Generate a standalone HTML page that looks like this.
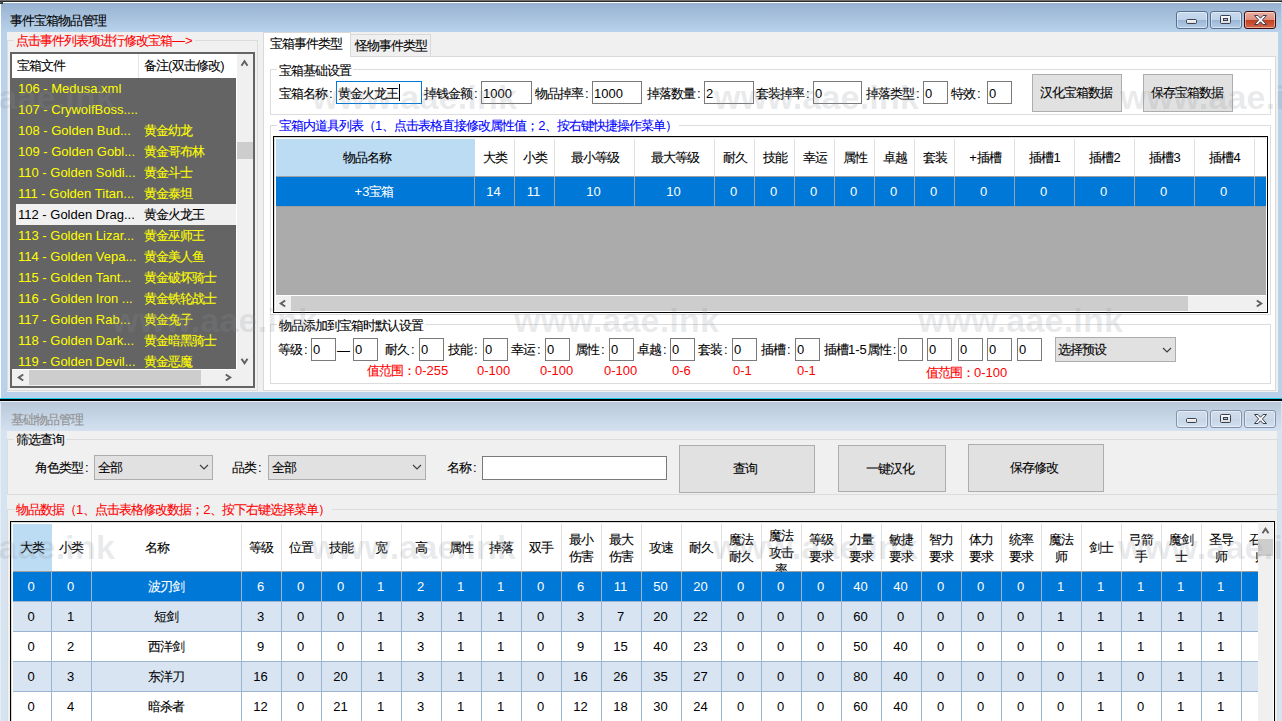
<!DOCTYPE html><html><head><meta charset="utf-8"><style>
html,body{margin:0;padding:0;width:1282px;height:721px;overflow:hidden;background:#f0f0f0}
body{position:relative;font-family:"Liberation Sans",sans-serif;font-size:13px;color:#000}
div{position:absolute;box-sizing:border-box}
svg{position:absolute}
.t{white-space:nowrap;height:18px;line-height:18px}
.c{text-align:center}
.z{letter-spacing:-1px;-webkit-text-stroke:0.1px currentColor}
.co{padding-left:2px}
.gb{border:1px solid #dcdcdc}
.inp{background:#fff;border:1px solid #7a7a7a}
.btn{background:#e1e1e1;border:1px solid #adadad}
</style></head><body>

<div style="left:0px;top:0px;width:1282px;height:400px;background:#b9d1ea"></div>
<div style="left:0px;top:0px;width:1282px;height:1px;background:#6e6e6e"></div>
<div style="left:0px;top:1px;width:1282px;height:1px;background:#2a2a2a"></div>
<div style="left:1px;top:2px;width:1280px;height:1px;background:#ffffff"></div>
<div style="left:1px;top:3px;width:1280px;height:29px;background:linear-gradient(#97b2d1,#b9d2eb)"></div>
<div style="left:0px;top:4px;width:1px;height:394px;background:#ffffff"></div>
<div style="left:0px;top:1px;width:3px;height:3px;background:#3a3a3a;border-radius:3px 0 0 0"></div>
<div class="t" style="left:10px;top:12px;"><span class="z">事件宝箱物品管理</span></div>
<div style="left:1176px;top:11px;width:32px;height:18px;background:linear-gradient(#c8daee 0%,#bed2ea 48%,#9ab6d6 52%,#b6cde6 100%);border:1px solid #56708e;border-radius:3px;box-shadow:inset 0 0 0 1px rgba(255,255,255,0.45)"><div style="left:9px;top:7px;width:11px;height:5px;background:linear-gradient(#fafafa,#dcdcdc);border:1px solid #3a4050;border-radius:1.5px"></div></div>
<div style="left:1210px;top:11px;width:32px;height:18px;background:linear-gradient(#c8daee 0%,#bed2ea 48%,#9ab6d6 52%,#b6cde6 100%);border:1px solid #56708e;border-radius:3px;box-shadow:inset 0 0 0 1px rgba(255,255,255,0.45)"><div style="left:9px;top:3px;width:11px;height:9px;background:linear-gradient(#fafafa,#dcdcdc);border:1px solid #3a4050;border-radius:1.5px"><div style="left:2px;top:2px;width:5px;height:3px;background:#a8c0dc;border:1px solid #3a4050"></div></div></div>
<div style="left:1244px;top:11px;width:32px;height:18px;background:linear-gradient(#eab0a2 0%,#dd907e 48%,#c2401f 52%,#d2664a 100%);border:1px solid #3c0a0a;border-radius:3px;box-shadow:inset 0 0 0 1px rgba(255,255,255,0.45)"><svg style="left:9px;top:3px" width="13" height="11" viewBox="0 0 13 11"><path d="M0.5 0.5 L4 0.5 L6.5 3.2 L9 0.5 L12.5 0.5 L8.4 5 L12.5 9.5 L9 9.5 L6.5 6.8 L4 9.5 L0.5 9.5 L4.6 5 Z" fill="#f4f4f4" stroke="#3a4050" stroke-width="1" stroke-linejoin="round"/></svg></div>
<div style="left:7px;top:32px;width:1271px;height:360px;background:#f0f0f0"></div>
<div class="gb" style="left:7px;top:40px;width:251px;height:351px;"></div>
<div class="t" style="left:14px;top:33px;height:14px;line-height:14px;padding:0 2px 0 2px;background:#f0f0f0;color:#ff0000"><div class="t" style="position:relative;top:-1px"><span class="z">点击事件列表项进行修改宝箱</span>—&gt;</div></div>
<div style="left:10px;top:52px;width:245px;height:336px;background:#646464;border:2px solid #646464"></div>
<div style="left:12px;top:54px;width:224px;height:24px;background:#fff"></div>
<div style="left:138px;top:54px;width:1px;height:24px;background:#e5e5e5"></div>
<div class="t" style="left:17px;top:57px;"><span class="z">宝箱文件</span></div>
<div class="t" style="left:144px;top:57px;"><span class="z">备注</span>(<span class="z">双击修改</span>)</div>
<div style="left:12px;top:78px;width:224px;height:291px;overflow:hidden">
<div class="t" style="left:6px;top:2px;color:#ffff00">106&nbsp;-&nbsp;Medusa.xml</div>
<div class="t" style="left:6px;top:23px;color:#ffff00">107&nbsp;-&nbsp;CrywolfBoss....</div>
<div class="t" style="left:6px;top:44px;color:#ffff00">108&nbsp;-&nbsp;Golden&nbsp;Bud...</div>
<div class="t" style="left:132px;top:44px;color:#ffff00"><span class="z">黄金幼龙</span></div>
<div class="t" style="left:6px;top:65px;color:#ffff00">109&nbsp;-&nbsp;Golden&nbsp;Gobl...</div>
<div class="t" style="left:132px;top:65px;color:#ffff00"><span class="z">黄金哥布林</span></div>
<div class="t" style="left:6px;top:86px;color:#ffff00">110&nbsp;-&nbsp;Golden&nbsp;Soldi...</div>
<div class="t" style="left:132px;top:86px;color:#ffff00"><span class="z">黄金斗士</span></div>
<div class="t" style="left:6px;top:107px;color:#ffff00">111&nbsp;-&nbsp;Golden&nbsp;Titan...</div>
<div class="t" style="left:132px;top:107px;color:#ffff00"><span class="z">黄金泰坦</span></div>
<div style="left:4px;top:126px;width:220px;height:21px;background:#f0f0f0"></div>
<div class="t" style="left:6px;top:128px;color:#000">112&nbsp;-&nbsp;Golden&nbsp;Drag...</div>
<div class="t" style="left:132px;top:128px;color:#000"><span class="z">黄金火龙王</span></div>
<div class="t" style="left:6px;top:149px;color:#ffff00">113&nbsp;-&nbsp;Golden&nbsp;Lizar...</div>
<div class="t" style="left:132px;top:149px;color:#ffff00"><span class="z">黄金巫师王</span></div>
<div class="t" style="left:6px;top:170px;color:#ffff00">114&nbsp;-&nbsp;Golden&nbsp;Vepa...</div>
<div class="t" style="left:132px;top:170px;color:#ffff00"><span class="z">黄金美人鱼</span></div>
<div class="t" style="left:6px;top:191px;color:#ffff00">115&nbsp;-&nbsp;Golden&nbsp;Tant...</div>
<div class="t" style="left:132px;top:191px;color:#ffff00"><span class="z">黄金破坏骑士</span></div>
<div class="t" style="left:6px;top:212px;color:#ffff00">116&nbsp;-&nbsp;Golden&nbsp;Iron&nbsp;...</div>
<div class="t" style="left:132px;top:212px;color:#ffff00"><span class="z">黄金铁轮战士</span></div>
<div class="t" style="left:6px;top:233px;color:#ffff00">117&nbsp;-&nbsp;Golden&nbsp;Rab...</div>
<div class="t" style="left:132px;top:233px;color:#ffff00"><span class="z">黄金兔子</span></div>
<div class="t" style="left:6px;top:254px;color:#ffff00">118&nbsp;-&nbsp;Golden&nbsp;Dark...</div>
<div class="t" style="left:132px;top:254px;color:#ffff00"><span class="z">黄金暗黑骑士</span></div>
<div class="t" style="left:6px;top:275px;color:#ffff00">119&nbsp;-&nbsp;Golden&nbsp;Devil...</div>
<div class="t" style="left:132px;top:275px;color:#ffff00"><span class="z">黄金恶魔</span></div>
</div>
<div style="left:236px;top:54px;width:1px;height:316px;background:#fff"></div>
<div style="left:12px;top:369px;width:224px;height:1px;background:#fff"></div>
<div style="left:237px;top:54px;width:16px;height:316px;background:#f0f0f0"></div>
<div style="left:237px;top:142px;width:16px;height:17px;background:#cdcdcd"></div>
<svg style="left:0;top:0;overflow:visible" width="1" height="1"><path d="M241.5 65.7 L244.5 61.3 L247.5 65.7" stroke="#606060" stroke-width="2" fill="none"/></svg>
<svg style="left:0;top:0;overflow:visible" width="1" height="1"><path d="M241.5 358.8 L244.5 363.2 L247.5 358.8" stroke="#606060" stroke-width="2" fill="none"/></svg>
<div style="left:12px;top:370px;width:241px;height:16px;background:#f0f0f0"></div>
<div style="left:29px;top:370px;width:172px;height:15px;background:#cdcdcd"></div>
<svg style="left:0;top:0;overflow:visible" width="1" height="1"><path d="M23.2 374.5 L18.8 377.5 L23.2 380.5" stroke="#606060" stroke-width="2" fill="none"/></svg>
<svg style="left:0;top:0;overflow:visible" width="1" height="1"><path d="M225.8 374.5 L230.2 377.5 L225.8 380.5" stroke="#606060" stroke-width="2" fill="none"/></svg>
<div style="left:263px;top:56px;width:1013px;height:335px;background:#fff;border:1px solid #d9d9d9"></div>
<div style="left:350px;top:34px;width:81px;height:23px;background:#f0f0f0;border:1px solid #d9d9d9;border-left:none"></div>
<div style="left:263px;top:32px;width:88px;height:25px;background:#fff;border:1px solid #d9d9d9;border-bottom:none"></div>
<div class="t" style="left:270px;top:35px;"><span class="z">宝箱事件类型</span></div>
<div class="t" style="left:355px;top:37px;"><span class="z">怪物事件类型</span></div>
<div class="gb" style="left:270px;top:69px;width:1001px;height:46px;"></div>
<div class="t" style="left:277px;top:62px;height:14px;line-height:14px;padding:0 2px 0 2px;background:#fff;color:#000"><div class="t" style="position:relative;top:0px"><span class="z">宝箱基础设置</span></div></div>
<div class="t" style="left:279px;top:85px;"><span class="z">宝箱名称</span><span class="co">:</span></div><div style="left:336px;top:81px;width:86px;height:23px;background:#fff;border:1px solid #0078d7"></div><div class="t" style="left:338px;top:85px;"><span class="z">黄金火龙王</span></div>
<div style="left:399px;top:84px;width:1px;height:17px;background:#000"></div>
<div class="t" style="left:424px;top:85px;"><span class="z">掉钱金额</span><span class="co">:</span></div><div style="left:481px;top:81px;width:51px;height:23px;background:#fff;border:1px solid #7a7a7a"></div><div class="t" style="left:483px;top:85px;">1000</div>
<div class="t" style="left:535px;top:85px;"><span class="z">物品掉率</span><span class="co">:</span></div><div style="left:592px;top:81px;width:50px;height:23px;background:#fff;border:1px solid #7a7a7a"></div><div class="t" style="left:594px;top:85px;">1000</div>
<div class="t" style="left:647px;top:85px;"><span class="z">掉落数量</span><span class="co">:</span></div><div style="left:704px;top:81px;width:50px;height:23px;background:#fff;border:1px solid #7a7a7a"></div><div class="t" style="left:706px;top:85px;">2</div>
<div class="t" style="left:756px;top:85px;"><span class="z">套装掉率</span><span class="co">:</span></div><div style="left:813px;top:81px;width:49px;height:23px;background:#fff;border:1px solid #7a7a7a"></div><div class="t" style="left:815px;top:85px;">0</div>
<div class="t" style="left:866px;top:85px;"><span class="z">掉落类型</span><span class="co">:</span></div><div style="left:923px;top:81px;width:25px;height:23px;background:#fff;border:1px solid #7a7a7a"></div><div class="t" style="left:925px;top:85px;">0</div>
<div class="t" style="left:951px;top:85px;"><span class="z">特效</span><span class="co">:</span></div><div style="left:987px;top:81px;width:25px;height:23px;background:#fff;border:1px solid #7a7a7a"></div><div class="t" style="left:989px;top:85px;">0</div>
<div class="btn" style="left:1032px;top:74px;width:90px;height:38px;"></div>
<div class="t c" style="left:1031px;top:84px;width:90px;"><span class="z">汉化宝箱数据</span></div>
<div class="btn" style="left:1143px;top:74px;width:90px;height:38px;"></div>
<div class="t c" style="left:1142px;top:84px;width:90px;"><span class="z">保存宝箱数据</span></div>
<div class="gb" style="left:270px;top:125px;width:1001px;height:190px;"></div>
<div class="t" style="left:277px;top:118px;height:14px;line-height:14px;padding:0 2px 0 2px;background:#fff;color:#0000ff"><div class="t" style="position:relative;top:-1px"><span class="z">宝箱内道具列表（</span>1<span class="z">、点击表格直接修改属性值；</span>2<span class="z">、按右键快捷操作菜单）</span></div></div>
<div style="left:273px;top:136px;width:995px;height:177px;background:#fff;border:1px solid #000"></div>
<div style="left:274px;top:137px;width:992px;height:1px;background:#d8d8d8"></div>
<div style="left:274px;top:137px;width:1px;height:174px;background:#d8d8d8"></div>
<div style="left:276px;top:139px;width:990px;height:156px;overflow:hidden;background:#ababab">
<div style="left:0px;top:0px;width:199px;height:38px;background:#bcdcf4;border-right:none;border-bottom:1px solid #a0a0a0"></div>
<div class="t c" style="left:-18px;top:10px;width:217px;"><span class="z">物品名称</span></div>
<div style="left:0px;top:38px;width:199px;height:30px;background:#0078d7;border-right:1px solid #a0a0a0;border-bottom:1px solid #a0a0a0"></div>
<div class="t c" style="left:-2px;top:44px;width:200px;color:#fff">+3<span class="z">宝箱</span></div>
<div style="left:199px;top:0px;width:40px;height:38px;background:#fff;border-right:1px solid #e0e0e0;border-bottom:1px solid #a0a0a0"></div>
<div class="t c" style="left:199px;top:10px;width:40px;"><span class="z">大类</span></div>
<div style="left:199px;top:38px;width:40px;height:30px;background:#0078d7;border-right:1px solid #a0a0a0;border-bottom:1px solid #a0a0a0"></div>
<div class="t c" style="left:197px;top:44px;width:41px;color:#fff">14</div>
<div style="left:239px;top:0px;width:40px;height:38px;background:#fff;border-right:1px solid #e0e0e0;border-bottom:1px solid #a0a0a0"></div>
<div class="t c" style="left:239px;top:10px;width:40px;"><span class="z">小类</span></div>
<div style="left:239px;top:38px;width:40px;height:30px;background:#0078d7;border-right:1px solid #a0a0a0;border-bottom:1px solid #a0a0a0"></div>
<div class="t c" style="left:237px;top:44px;width:41px;color:#fff">11</div>
<div style="left:279px;top:0px;width:80px;height:38px;background:#fff;border-right:1px solid #e0e0e0;border-bottom:1px solid #a0a0a0"></div>
<div class="t c" style="left:279px;top:10px;width:80px;"><span class="z">最小等级</span></div>
<div style="left:279px;top:38px;width:80px;height:30px;background:#0078d7;border-right:1px solid #a0a0a0;border-bottom:1px solid #a0a0a0"></div>
<div class="t c" style="left:277px;top:44px;width:81px;color:#fff">10</div>
<div style="left:359px;top:0px;width:80px;height:38px;background:#fff;border-right:1px solid #e0e0e0;border-bottom:1px solid #a0a0a0"></div>
<div class="t c" style="left:359px;top:10px;width:80px;"><span class="z">最大等级</span></div>
<div style="left:359px;top:38px;width:80px;height:30px;background:#0078d7;border-right:1px solid #a0a0a0;border-bottom:1px solid #a0a0a0"></div>
<div class="t c" style="left:357px;top:44px;width:81px;color:#fff">10</div>
<div style="left:439px;top:0px;width:40px;height:38px;background:#fff;border-right:1px solid #e0e0e0;border-bottom:1px solid #a0a0a0"></div>
<div class="t c" style="left:439px;top:10px;width:40px;"><span class="z">耐久</span></div>
<div style="left:439px;top:38px;width:40px;height:30px;background:#0078d7;border-right:1px solid #a0a0a0;border-bottom:1px solid #a0a0a0"></div>
<div class="t c" style="left:437px;top:44px;width:41px;color:#fff">0</div>
<div style="left:479px;top:0px;width:40px;height:38px;background:#fff;border-right:1px solid #e0e0e0;border-bottom:1px solid #a0a0a0"></div>
<div class="t c" style="left:479px;top:10px;width:40px;"><span class="z">技能</span></div>
<div style="left:479px;top:38px;width:40px;height:30px;background:#0078d7;border-right:1px solid #a0a0a0;border-bottom:1px solid #a0a0a0"></div>
<div class="t c" style="left:477px;top:44px;width:41px;color:#fff">0</div>
<div style="left:519px;top:0px;width:40px;height:38px;background:#fff;border-right:1px solid #e0e0e0;border-bottom:1px solid #a0a0a0"></div>
<div class="t c" style="left:519px;top:10px;width:40px;"><span class="z">幸运</span></div>
<div style="left:519px;top:38px;width:40px;height:30px;background:#0078d7;border-right:1px solid #a0a0a0;border-bottom:1px solid #a0a0a0"></div>
<div class="t c" style="left:517px;top:44px;width:41px;color:#fff">0</div>
<div style="left:559px;top:0px;width:40px;height:38px;background:#fff;border-right:1px solid #e0e0e0;border-bottom:1px solid #a0a0a0"></div>
<div class="t c" style="left:559px;top:10px;width:40px;"><span class="z">属性</span></div>
<div style="left:559px;top:38px;width:40px;height:30px;background:#0078d7;border-right:1px solid #a0a0a0;border-bottom:1px solid #a0a0a0"></div>
<div class="t c" style="left:557px;top:44px;width:41px;color:#fff">0</div>
<div style="left:599px;top:0px;width:40px;height:38px;background:#fff;border-right:1px solid #e0e0e0;border-bottom:1px solid #a0a0a0"></div>
<div class="t c" style="left:599px;top:10px;width:40px;"><span class="z">卓越</span></div>
<div style="left:599px;top:38px;width:40px;height:30px;background:#0078d7;border-right:1px solid #a0a0a0;border-bottom:1px solid #a0a0a0"></div>
<div class="t c" style="left:597px;top:44px;width:41px;color:#fff">0</div>
<div style="left:639px;top:0px;width:40px;height:38px;background:#fff;border-right:1px solid #e0e0e0;border-bottom:1px solid #a0a0a0"></div>
<div class="t c" style="left:639px;top:10px;width:40px;"><span class="z">套装</span></div>
<div style="left:639px;top:38px;width:40px;height:30px;background:#0078d7;border-right:1px solid #a0a0a0;border-bottom:1px solid #a0a0a0"></div>
<div class="t c" style="left:637px;top:44px;width:41px;color:#fff">0</div>
<div style="left:679px;top:0px;width:60px;height:38px;background:#fff;border-right:1px solid #e0e0e0;border-bottom:1px solid #a0a0a0"></div>
<div class="t c" style="left:679px;top:10px;width:60px;">+<span class="z">插槽</span></div>
<div style="left:679px;top:38px;width:60px;height:30px;background:#0078d7;border-right:1px solid #a0a0a0;border-bottom:1px solid #a0a0a0"></div>
<div class="t c" style="left:677px;top:44px;width:61px;color:#fff">0</div>
<div style="left:739px;top:0px;width:60px;height:38px;background:#fff;border-right:1px solid #e0e0e0;border-bottom:1px solid #a0a0a0"></div>
<div class="t c" style="left:739px;top:10px;width:60px;"><span class="z">插槽</span>1</div>
<div style="left:739px;top:38px;width:60px;height:30px;background:#0078d7;border-right:1px solid #a0a0a0;border-bottom:1px solid #a0a0a0"></div>
<div class="t c" style="left:737px;top:44px;width:61px;color:#fff">0</div>
<div style="left:799px;top:0px;width:60px;height:38px;background:#fff;border-right:1px solid #e0e0e0;border-bottom:1px solid #a0a0a0"></div>
<div class="t c" style="left:799px;top:10px;width:60px;"><span class="z">插槽</span>2</div>
<div style="left:799px;top:38px;width:60px;height:30px;background:#0078d7;border-right:1px solid #a0a0a0;border-bottom:1px solid #a0a0a0"></div>
<div class="t c" style="left:797px;top:44px;width:61px;color:#fff">0</div>
<div style="left:859px;top:0px;width:60px;height:38px;background:#fff;border-right:1px solid #e0e0e0;border-bottom:1px solid #a0a0a0"></div>
<div class="t c" style="left:859px;top:10px;width:60px;"><span class="z">插槽</span>3</div>
<div style="left:859px;top:38px;width:60px;height:30px;background:#0078d7;border-right:1px solid #a0a0a0;border-bottom:1px solid #a0a0a0"></div>
<div class="t c" style="left:857px;top:44px;width:61px;color:#fff">0</div>
<div style="left:919px;top:0px;width:60px;height:38px;background:#fff;border-right:1px solid #e0e0e0;border-bottom:1px solid #a0a0a0"></div>
<div class="t c" style="left:919px;top:10px;width:60px;"><span class="z">插槽</span>4</div>
<div style="left:919px;top:38px;width:60px;height:30px;background:#0078d7;border-right:1px solid #a0a0a0;border-bottom:1px solid #a0a0a0"></div>
<div class="t c" style="left:917px;top:44px;width:61px;color:#fff">0</div>
<div style="left:979px;top:0px;width:60px;height:38px;background:#fff;border-right:1px solid #e0e0e0;border-bottom:1px solid #a0a0a0"></div>
<div style="left:979px;top:38px;width:60px;height:30px;background:#0078d7;border-right:1px solid #a0a0a0;border-bottom:1px solid #a0a0a0"></div>
</div>
<div style="left:276px;top:295px;width:990px;height:1px;background:#fff"></div>
<div style="left:276px;top:296px;width:990px;height:15px;background:#f0f0f0"></div>
<div style="left:291px;top:296px;width:897px;height:15px;background:#cdcdcd"></div>
<svg style="left:0;top:0;overflow:visible" width="1" height="1"><path d="M285.2 300.5 L280.8 303.5 L285.2 306.5" stroke="#606060" stroke-width="2" fill="none"/></svg>
<svg style="left:0;top:0;overflow:visible" width="1" height="1"><path d="M1256.8 300.5 L1261.2 303.5 L1256.8 306.5" stroke="#606060" stroke-width="2" fill="none"/></svg>
<div class="gb" style="left:270px;top:324px;width:1001px;height:60px;"></div>
<div class="t" style="left:277px;top:317px;height:14px;line-height:14px;padding:0 2px 0 2px;background:#fff;color:#000"><div class="t" style="position:relative;top:0px"><span class="z">物品添加到宝箱时默认设置</span></div></div>
<div class="t" style="left:278px;top:341px;"><span class="z">等级</span><span class="co">:</span></div><div style="left:311px;top:338px;width:25px;height:23px;background:#fff;border:1px solid #7a7a7a"></div><div class="t" style="left:313px;top:341px;">0</div>
<div class="t" style="left:337px;top:342px;">—</div>
<div style="left:353px;top:338px;width:25px;height:23px;background:#fff;border:1px solid #7a7a7a"></div><div class="t" style="left:355px;top:341px;">0</div>
<div class="t" style="left:385px;top:341px;"><span class="z">耐久</span><span class="co">:</span></div><div style="left:419px;top:338px;width:25px;height:23px;background:#fff;border:1px solid #7a7a7a"></div><div class="t" style="left:421px;top:341px;">0</div>
<div class="t" style="left:448px;top:341px;"><span class="z">技能</span><span class="co">:</span></div><div style="left:483px;top:338px;width:25px;height:23px;background:#fff;border:1px solid #7a7a7a"></div><div class="t" style="left:485px;top:341px;">0</div>
<div class="t" style="left:511px;top:341px;"><span class="z">幸运</span><span class="co">:</span></div><div style="left:545px;top:338px;width:25px;height:23px;background:#fff;border:1px solid #7a7a7a"></div><div class="t" style="left:547px;top:341px;">0</div>
<div class="t" style="left:575px;top:341px;"><span class="z">属性</span><span class="co">:</span></div><div style="left:609px;top:338px;width:25px;height:23px;background:#fff;border:1px solid #7a7a7a"></div><div class="t" style="left:611px;top:341px;">0</div>
<div class="t" style="left:637px;top:341px;"><span class="z">卓越</span><span class="co">:</span></div><div style="left:670px;top:338px;width:25px;height:23px;background:#fff;border:1px solid #7a7a7a"></div><div class="t" style="left:672px;top:341px;">0</div>
<div class="t" style="left:698px;top:341px;"><span class="z">套装</span><span class="co">:</span></div><div style="left:732px;top:338px;width:25px;height:23px;background:#fff;border:1px solid #7a7a7a"></div><div class="t" style="left:734px;top:341px;">0</div>
<div class="t" style="left:761px;top:341px;"><span class="z">插槽</span><span class="co">:</span></div><div style="left:795px;top:338px;width:25px;height:23px;background:#fff;border:1px solid #7a7a7a"></div><div class="t" style="left:797px;top:341px;">0</div>
<div class="t" style="left:824px;top:341px;"><span class="z">插槽</span>1-5<span class="z">属性</span><span class="co">:</span></div><div style="left:898px;top:338px;width:25px;height:23px;background:#fff;border:1px solid #7a7a7a"></div><div class="t" style="left:900px;top:341px;">0</div>
<div style="left:927px;top:338px;width:25px;height:23px;background:#fff;border:1px solid #7a7a7a"></div><div class="t" style="left:929px;top:341px;">0</div>
<div style="left:958px;top:338px;width:25px;height:23px;background:#fff;border:1px solid #7a7a7a"></div><div class="t" style="left:960px;top:341px;">0</div>
<div style="left:987px;top:338px;width:25px;height:23px;background:#fff;border:1px solid #7a7a7a"></div><div class="t" style="left:989px;top:341px;">0</div>
<div style="left:1017px;top:338px;width:25px;height:23px;background:#fff;border:1px solid #7a7a7a"></div><div class="t" style="left:1019px;top:341px;">0</div>
<div class="t" style="left:367px;top:362px;color:#ff0000"><span class="z">值范围：</span>0-255</div>
<div class="t" style="left:477px;top:362px;color:#ff0000">0-100</div>
<div class="t" style="left:540px;top:362px;color:#ff0000">0-100</div>
<div class="t" style="left:604px;top:362px;color:#ff0000">0-100</div>
<div class="t" style="left:672px;top:362px;color:#ff0000">0-6</div>
<div class="t" style="left:733px;top:362px;color:#ff0000">0-1</div>
<div class="t" style="left:797px;top:362px;color:#ff0000">0-1</div>
<div class="t" style="left:926px;top:364px;color:#ff0000"><span class="z">值范围：</span>0-100</div>
<div style="left:1055px;top:337px;width:121px;height:25px;background:#e1e1e1;border:1px solid #adadad"></div>
<div class="t" style="left:1058px;top:341px;"><span class="z">选择预设</span></div>
<svg style="left:1162px;top:346px" width="10" height="8"><path d="M1 2 L5 6 L9 2" stroke="#404040" stroke-width="1.2" fill="none"/></svg>
<div style="left:0px;top:398px;width:1282px;height:1px;background:#19c8e8"></div>
<div style="left:0px;top:399px;width:1282px;height:2px;background:#000"></div>
<div style="left:0px;top:401px;width:1282px;height:320px;background:#d6e3f0"></div>
<div style="left:0px;top:404px;width:1px;height:317px;background:#e8ecf4"></div>
<div style="left:1px;top:401px;width:1280px;height:1px;background:#e8eef6"></div>
<div style="left:1px;top:402px;width:1280px;height:29px;background:linear-gradient(#b9c9da,#d3e1f0)"></div>
<div class="t" style="left:11px;top:411px;color:#909090"><span class="z">基础物品管理</span></div>
<div style="left:1176px;top:410px;width:32px;height:18px;background:linear-gradient(#d0dcea 0%,#cbd8e8 50%,#c6d5e6 52%,#d2e0ee 100%);border:1px solid #8292b0;border-radius:3px;box-shadow:inset 0 0 0 1px rgba(255,255,255,0.45)"><div style="left:9px;top:7px;width:11px;height:5px;background:linear-gradient(#fafafa,#dcdcdc);border:1px solid #3a4050;border-radius:1.5px"></div></div>
<div style="left:1210px;top:410px;width:32px;height:18px;background:linear-gradient(#d0dcea 0%,#cbd8e8 50%,#c6d5e6 52%,#d2e0ee 100%);border:1px solid #8292b0;border-radius:3px;box-shadow:inset 0 0 0 1px rgba(255,255,255,0.45)"><div style="left:9px;top:3px;width:11px;height:9px;background:linear-gradient(#fafafa,#dcdcdc);border:1px solid #3a4050;border-radius:1.5px"><div style="left:2px;top:2px;width:5px;height:3px;background:#a8c0dc;border:1px solid #3a4050"></div></div></div>
<div style="left:1244px;top:410px;width:32px;height:18px;background:linear-gradient(#d0dcea 0%,#cbd8e8 50%,#c6d5e6 52%,#d2e0ee 100%);border:1px solid #8292b0;border-radius:3px;box-shadow:inset 0 0 0 1px rgba(255,255,255,0.45)"><svg style="left:9px;top:3px" width="13" height="11" viewBox="0 0 13 11"><path d="M0.5 0.5 L4 0.5 L6.5 3.2 L9 0.5 L12.5 0.5 L8.4 5 L12.5 9.5 L9 9.5 L6.5 6.8 L4 9.5 L0.5 9.5 L4.6 5 Z" fill="#f4f4f4" stroke="#3a4050" stroke-width="1" stroke-linejoin="round"/></svg></div>
<div style="left:7px;top:431px;width:1270px;height:290px;background:#f0f0f0"></div>
<div class="gb" style="left:7px;top:439px;width:1271px;height:56px;"></div>
<div class="t" style="left:14px;top:432px;height:14px;line-height:14px;padding:0 2px 0 2px;background:#f0f0f0;color:#000"><div class="t" style="position:relative;top:-1px"><span class="z">筛选查询</span></div></div>
<div class="t" style="left:35px;top:459px;"><span class="z">角色类型</span><span class="co">:</span></div>
<div style="left:94px;top:455px;width:119px;height:25px;background:#e1e1e1;border:1px solid #adadad"></div>
<div class="t" style="left:98px;top:459px;"><span class="z">全部</span></div>
<svg style="left:199px;top:463px" width="10" height="8"><path d="M1 2 L5 6 L9 2" stroke="#404040" stroke-width="1.2" fill="none"/></svg>
<div class="t" style="left:232px;top:459px;"><span class="z">品类</span><span class="co">:</span></div>
<div style="left:268px;top:455px;width:158px;height:25px;background:#e1e1e1;border:1px solid #adadad"></div>
<div class="t" style="left:272px;top:459px;"><span class="z">全部</span></div>
<svg style="left:412px;top:463px" width="10" height="8"><path d="M1 2 L5 6 L9 2" stroke="#404040" stroke-width="1.2" fill="none"/></svg>
<div class="t" style="left:447px;top:459px;"><span class="z">名称</span><span class="co">:</span></div>
<div style="left:482px;top:456px;width:185px;height:24px;background:#fff;border:1px solid #7a7a7a"></div>
<div class="btn" style="left:679px;top:445px;width:136px;height:48px;"></div>
<div class="t c" style="left:677px;top:460px;width:136px;"><span class="z">查询</span></div>
<div class="btn" style="left:838px;top:445px;width:108px;height:47px;"></div>
<div class="t c" style="left:836px;top:460px;width:108px;"><span class="z">一键汉化</span></div>
<div class="btn" style="left:968px;top:444px;width:136px;height:48px;"></div>
<div class="t c" style="left:966px;top:459px;width:136px;"><span class="z">保存修改</span></div>
<div class="gb" style="left:7px;top:509px;width:1271px;height:230px;"></div>
<div class="t" style="left:14px;top:502px;height:14px;line-height:14px;padding:0 2px 0 2px;background:#f0f0f0;color:#ff0000"><div class="t" style="position:relative;top:-1px"><span class="z">物品数据（</span>1<span class="z">、点击表格修改数据；</span>2<span class="z">、按下右键选择菜单）</span></div></div>
<div style="left:10px;top:521px;width:1265px;height:210px;background:#fff;border:1px solid #000"></div>
<div style="left:11px;top:522px;width:1262px;height:1px;background:#d8d8d8"></div>
<div style="left:11px;top:522px;width:1px;height:200px;background:#d8d8d8"></div>
<div style="left:13px;top:524px;width:1245px;height:197px;overflow:hidden">
<div style="left:0px;top:0px;width:39px;height:48px;background:#bcdcf4;border-right:none;border-bottom:1px solid #a0a0a0"></div>
<div class="t c" style="left:-2px;top:15px;width:41px;"><span class="z">大类</span></div>
<div style="left:0px;top:48px;width:39px;height:30px;background:#0078d7;border-right:1px solid #a3b5cc;border-bottom:1px solid #a3b5cc"></div>
<div class="t c" style="left:-2px;top:54px;width:40px;color:#fff">0</div>
<div style="left:0px;top:78px;width:39px;height:30px;background:#d8e4f1;border-right:1px solid #9ab4d2;border-bottom:1px solid #9ab4d2"></div>
<div class="t c" style="left:-2px;top:84px;width:40px;color:#000">0</div>
<div style="left:0px;top:108px;width:39px;height:30px;background:#fff;border-right:1px solid #9ab4d2;border-bottom:1px solid #9ab4d2"></div>
<div class="t c" style="left:-2px;top:114px;width:40px;color:#000">0</div>
<div style="left:0px;top:138px;width:39px;height:30px;background:#d8e4f1;border-right:1px solid #9ab4d2;border-bottom:1px solid #9ab4d2"></div>
<div class="t c" style="left:-2px;top:144px;width:40px;color:#000">0</div>
<div style="left:0px;top:168px;width:39px;height:30px;background:#fff;border-right:1px solid #9ab4d2;border-bottom:1px solid #9ab4d2"></div>
<div class="t c" style="left:-2px;top:174px;width:40px;color:#000">0</div>
<div style="left:39px;top:0px;width:40px;height:48px;background:#fff;border-right:1px solid #e0e0e0;border-bottom:1px solid #a0a0a0"></div>
<div class="t c" style="left:37px;top:15px;width:42px;"><span class="z">小类</span></div>
<div style="left:39px;top:48px;width:40px;height:30px;background:#0078d7;border-right:1px solid #a3b5cc;border-bottom:1px solid #a3b5cc"></div>
<div class="t c" style="left:37px;top:54px;width:41px;color:#fff">0</div>
<div style="left:39px;top:78px;width:40px;height:30px;background:#d8e4f1;border-right:1px solid #9ab4d2;border-bottom:1px solid #9ab4d2"></div>
<div class="t c" style="left:37px;top:84px;width:41px;color:#000">1</div>
<div style="left:39px;top:108px;width:40px;height:30px;background:#fff;border-right:1px solid #9ab4d2;border-bottom:1px solid #9ab4d2"></div>
<div class="t c" style="left:37px;top:114px;width:41px;color:#000">2</div>
<div style="left:39px;top:138px;width:40px;height:30px;background:#d8e4f1;border-right:1px solid #9ab4d2;border-bottom:1px solid #9ab4d2"></div>
<div class="t c" style="left:37px;top:144px;width:41px;color:#000">3</div>
<div style="left:39px;top:168px;width:40px;height:30px;background:#fff;border-right:1px solid #9ab4d2;border-bottom:1px solid #9ab4d2"></div>
<div class="t c" style="left:37px;top:174px;width:41px;color:#000">4</div>
<div style="left:79px;top:0px;width:150px;height:48px;background:#fff;border-right:1px solid #e0e0e0;border-bottom:1px solid #a0a0a0"></div>
<div class="t c" style="left:59px;top:15px;width:170px;"><span class="z">名称</span></div>
<div style="left:79px;top:48px;width:150px;height:30px;background:#0078d7;border-right:1px solid #a3b5cc;border-bottom:1px solid #a3b5cc"></div>
<div class="t c" style="left:77px;top:54px;width:151px;color:#fff"><span class="z">波刃剑</span></div>
<div style="left:79px;top:78px;width:150px;height:30px;background:#d8e4f1;border-right:1px solid #9ab4d2;border-bottom:1px solid #9ab4d2"></div>
<div class="t c" style="left:77px;top:84px;width:151px;color:#000"><span class="z">短剑</span></div>
<div style="left:79px;top:108px;width:150px;height:30px;background:#fff;border-right:1px solid #9ab4d2;border-bottom:1px solid #9ab4d2"></div>
<div class="t c" style="left:77px;top:114px;width:151px;color:#000"><span class="z">西洋剑</span></div>
<div style="left:79px;top:138px;width:150px;height:30px;background:#d8e4f1;border-right:1px solid #9ab4d2;border-bottom:1px solid #9ab4d2"></div>
<div class="t c" style="left:77px;top:144px;width:151px;color:#000"><span class="z">东洋刀</span></div>
<div style="left:79px;top:168px;width:150px;height:30px;background:#fff;border-right:1px solid #9ab4d2;border-bottom:1px solid #9ab4d2"></div>
<div class="t c" style="left:77px;top:174px;width:151px;color:#000"><span class="z">暗杀者</span></div>
<div style="left:229px;top:0px;width:40px;height:48px;background:#fff;border-right:1px solid #e0e0e0;border-bottom:1px solid #a0a0a0"></div>
<div class="t c" style="left:227px;top:15px;width:42px;"><span class="z">等级</span></div>
<div style="left:229px;top:48px;width:40px;height:30px;background:#0078d7;border-right:1px solid #a3b5cc;border-bottom:1px solid #a3b5cc"></div>
<div class="t c" style="left:227px;top:54px;width:41px;color:#fff">6</div>
<div style="left:229px;top:78px;width:40px;height:30px;background:#d8e4f1;border-right:1px solid #9ab4d2;border-bottom:1px solid #9ab4d2"></div>
<div class="t c" style="left:227px;top:84px;width:41px;color:#000">3</div>
<div style="left:229px;top:108px;width:40px;height:30px;background:#fff;border-right:1px solid #9ab4d2;border-bottom:1px solid #9ab4d2"></div>
<div class="t c" style="left:227px;top:114px;width:41px;color:#000">9</div>
<div style="left:229px;top:138px;width:40px;height:30px;background:#d8e4f1;border-right:1px solid #9ab4d2;border-bottom:1px solid #9ab4d2"></div>
<div class="t c" style="left:227px;top:144px;width:41px;color:#000">16</div>
<div style="left:229px;top:168px;width:40px;height:30px;background:#fff;border-right:1px solid #9ab4d2;border-bottom:1px solid #9ab4d2"></div>
<div class="t c" style="left:227px;top:174px;width:41px;color:#000">12</div>
<div style="left:269px;top:0px;width:40px;height:48px;background:#fff;border-right:1px solid #e0e0e0;border-bottom:1px solid #a0a0a0"></div>
<div class="t c" style="left:267px;top:15px;width:42px;"><span class="z">位置</span></div>
<div style="left:269px;top:48px;width:40px;height:30px;background:#0078d7;border-right:1px solid #a3b5cc;border-bottom:1px solid #a3b5cc"></div>
<div class="t c" style="left:267px;top:54px;width:41px;color:#fff">0</div>
<div style="left:269px;top:78px;width:40px;height:30px;background:#d8e4f1;border-right:1px solid #9ab4d2;border-bottom:1px solid #9ab4d2"></div>
<div class="t c" style="left:267px;top:84px;width:41px;color:#000">0</div>
<div style="left:269px;top:108px;width:40px;height:30px;background:#fff;border-right:1px solid #9ab4d2;border-bottom:1px solid #9ab4d2"></div>
<div class="t c" style="left:267px;top:114px;width:41px;color:#000">0</div>
<div style="left:269px;top:138px;width:40px;height:30px;background:#d8e4f1;border-right:1px solid #9ab4d2;border-bottom:1px solid #9ab4d2"></div>
<div class="t c" style="left:267px;top:144px;width:41px;color:#000">0</div>
<div style="left:269px;top:168px;width:40px;height:30px;background:#fff;border-right:1px solid #9ab4d2;border-bottom:1px solid #9ab4d2"></div>
<div class="t c" style="left:267px;top:174px;width:41px;color:#000">0</div>
<div style="left:309px;top:0px;width:40px;height:48px;background:#fff;border-right:1px solid #e0e0e0;border-bottom:1px solid #a0a0a0"></div>
<div class="t c" style="left:307px;top:15px;width:42px;"><span class="z">技能</span></div>
<div style="left:309px;top:48px;width:40px;height:30px;background:#0078d7;border-right:1px solid #a3b5cc;border-bottom:1px solid #a3b5cc"></div>
<div class="t c" style="left:307px;top:54px;width:41px;color:#fff">0</div>
<div style="left:309px;top:78px;width:40px;height:30px;background:#d8e4f1;border-right:1px solid #9ab4d2;border-bottom:1px solid #9ab4d2"></div>
<div class="t c" style="left:307px;top:84px;width:41px;color:#000">0</div>
<div style="left:309px;top:108px;width:40px;height:30px;background:#fff;border-right:1px solid #9ab4d2;border-bottom:1px solid #9ab4d2"></div>
<div class="t c" style="left:307px;top:114px;width:41px;color:#000">0</div>
<div style="left:309px;top:138px;width:40px;height:30px;background:#d8e4f1;border-right:1px solid #9ab4d2;border-bottom:1px solid #9ab4d2"></div>
<div class="t c" style="left:307px;top:144px;width:41px;color:#000">20</div>
<div style="left:309px;top:168px;width:40px;height:30px;background:#fff;border-right:1px solid #9ab4d2;border-bottom:1px solid #9ab4d2"></div>
<div class="t c" style="left:307px;top:174px;width:41px;color:#000">21</div>
<div style="left:349px;top:0px;width:40px;height:48px;background:#fff;border-right:1px solid #e0e0e0;border-bottom:1px solid #a0a0a0"></div>
<div class="t c" style="left:347px;top:15px;width:42px;"><span class="z">宽</span></div>
<div style="left:349px;top:48px;width:40px;height:30px;background:#0078d7;border-right:1px solid #a3b5cc;border-bottom:1px solid #a3b5cc"></div>
<div class="t c" style="left:347px;top:54px;width:41px;color:#fff">1</div>
<div style="left:349px;top:78px;width:40px;height:30px;background:#d8e4f1;border-right:1px solid #9ab4d2;border-bottom:1px solid #9ab4d2"></div>
<div class="t c" style="left:347px;top:84px;width:41px;color:#000">1</div>
<div style="left:349px;top:108px;width:40px;height:30px;background:#fff;border-right:1px solid #9ab4d2;border-bottom:1px solid #9ab4d2"></div>
<div class="t c" style="left:347px;top:114px;width:41px;color:#000">1</div>
<div style="left:349px;top:138px;width:40px;height:30px;background:#d8e4f1;border-right:1px solid #9ab4d2;border-bottom:1px solid #9ab4d2"></div>
<div class="t c" style="left:347px;top:144px;width:41px;color:#000">1</div>
<div style="left:349px;top:168px;width:40px;height:30px;background:#fff;border-right:1px solid #9ab4d2;border-bottom:1px solid #9ab4d2"></div>
<div class="t c" style="left:347px;top:174px;width:41px;color:#000">1</div>
<div style="left:389px;top:0px;width:40px;height:48px;background:#fff;border-right:1px solid #e0e0e0;border-bottom:1px solid #a0a0a0"></div>
<div class="t c" style="left:387px;top:15px;width:42px;"><span class="z">高</span></div>
<div style="left:389px;top:48px;width:40px;height:30px;background:#0078d7;border-right:1px solid #a3b5cc;border-bottom:1px solid #a3b5cc"></div>
<div class="t c" style="left:387px;top:54px;width:41px;color:#fff">2</div>
<div style="left:389px;top:78px;width:40px;height:30px;background:#d8e4f1;border-right:1px solid #9ab4d2;border-bottom:1px solid #9ab4d2"></div>
<div class="t c" style="left:387px;top:84px;width:41px;color:#000">3</div>
<div style="left:389px;top:108px;width:40px;height:30px;background:#fff;border-right:1px solid #9ab4d2;border-bottom:1px solid #9ab4d2"></div>
<div class="t c" style="left:387px;top:114px;width:41px;color:#000">3</div>
<div style="left:389px;top:138px;width:40px;height:30px;background:#d8e4f1;border-right:1px solid #9ab4d2;border-bottom:1px solid #9ab4d2"></div>
<div class="t c" style="left:387px;top:144px;width:41px;color:#000">3</div>
<div style="left:389px;top:168px;width:40px;height:30px;background:#fff;border-right:1px solid #9ab4d2;border-bottom:1px solid #9ab4d2"></div>
<div class="t c" style="left:387px;top:174px;width:41px;color:#000">3</div>
<div style="left:429px;top:0px;width:40px;height:48px;background:#fff;border-right:1px solid #e0e0e0;border-bottom:1px solid #a0a0a0"></div>
<div class="t c" style="left:427px;top:15px;width:42px;"><span class="z">属性</span></div>
<div style="left:429px;top:48px;width:40px;height:30px;background:#0078d7;border-right:1px solid #a3b5cc;border-bottom:1px solid #a3b5cc"></div>
<div class="t c" style="left:427px;top:54px;width:41px;color:#fff">1</div>
<div style="left:429px;top:78px;width:40px;height:30px;background:#d8e4f1;border-right:1px solid #9ab4d2;border-bottom:1px solid #9ab4d2"></div>
<div class="t c" style="left:427px;top:84px;width:41px;color:#000">1</div>
<div style="left:429px;top:108px;width:40px;height:30px;background:#fff;border-right:1px solid #9ab4d2;border-bottom:1px solid #9ab4d2"></div>
<div class="t c" style="left:427px;top:114px;width:41px;color:#000">1</div>
<div style="left:429px;top:138px;width:40px;height:30px;background:#d8e4f1;border-right:1px solid #9ab4d2;border-bottom:1px solid #9ab4d2"></div>
<div class="t c" style="left:427px;top:144px;width:41px;color:#000">1</div>
<div style="left:429px;top:168px;width:40px;height:30px;background:#fff;border-right:1px solid #9ab4d2;border-bottom:1px solid #9ab4d2"></div>
<div class="t c" style="left:427px;top:174px;width:41px;color:#000">1</div>
<div style="left:469px;top:0px;width:40px;height:48px;background:#fff;border-right:1px solid #e0e0e0;border-bottom:1px solid #a0a0a0"></div>
<div class="t c" style="left:467px;top:15px;width:42px;"><span class="z">掉落</span></div>
<div style="left:469px;top:48px;width:40px;height:30px;background:#0078d7;border-right:1px solid #a3b5cc;border-bottom:1px solid #a3b5cc"></div>
<div class="t c" style="left:467px;top:54px;width:41px;color:#fff">1</div>
<div style="left:469px;top:78px;width:40px;height:30px;background:#d8e4f1;border-right:1px solid #9ab4d2;border-bottom:1px solid #9ab4d2"></div>
<div class="t c" style="left:467px;top:84px;width:41px;color:#000">1</div>
<div style="left:469px;top:108px;width:40px;height:30px;background:#fff;border-right:1px solid #9ab4d2;border-bottom:1px solid #9ab4d2"></div>
<div class="t c" style="left:467px;top:114px;width:41px;color:#000">1</div>
<div style="left:469px;top:138px;width:40px;height:30px;background:#d8e4f1;border-right:1px solid #9ab4d2;border-bottom:1px solid #9ab4d2"></div>
<div class="t c" style="left:467px;top:144px;width:41px;color:#000">1</div>
<div style="left:469px;top:168px;width:40px;height:30px;background:#fff;border-right:1px solid #9ab4d2;border-bottom:1px solid #9ab4d2"></div>
<div class="t c" style="left:467px;top:174px;width:41px;color:#000">1</div>
<div style="left:509px;top:0px;width:40px;height:48px;background:#fff;border-right:1px solid #e0e0e0;border-bottom:1px solid #a0a0a0"></div>
<div class="t c" style="left:507px;top:15px;width:42px;"><span class="z">双手</span></div>
<div style="left:509px;top:48px;width:40px;height:30px;background:#0078d7;border-right:1px solid #a3b5cc;border-bottom:1px solid #a3b5cc"></div>
<div class="t c" style="left:507px;top:54px;width:41px;color:#fff">0</div>
<div style="left:509px;top:78px;width:40px;height:30px;background:#d8e4f1;border-right:1px solid #9ab4d2;border-bottom:1px solid #9ab4d2"></div>
<div class="t c" style="left:507px;top:84px;width:41px;color:#000">0</div>
<div style="left:509px;top:108px;width:40px;height:30px;background:#fff;border-right:1px solid #9ab4d2;border-bottom:1px solid #9ab4d2"></div>
<div class="t c" style="left:507px;top:114px;width:41px;color:#000">0</div>
<div style="left:509px;top:138px;width:40px;height:30px;background:#d8e4f1;border-right:1px solid #9ab4d2;border-bottom:1px solid #9ab4d2"></div>
<div class="t c" style="left:507px;top:144px;width:41px;color:#000">0</div>
<div style="left:509px;top:168px;width:40px;height:30px;background:#fff;border-right:1px solid #9ab4d2;border-bottom:1px solid #9ab4d2"></div>
<div class="t c" style="left:507px;top:174px;width:41px;color:#000">0</div>
<div style="left:549px;top:0px;width:40px;height:48px;background:#fff;border-right:1px solid #e0e0e0;border-bottom:1px solid #a0a0a0"></div>
<div class="t c" style="left:547px;top:7px;width:42px;"><span class="z">最小</span></div>
<div class="t c" style="left:547px;top:24px;width:42px;"><span class="z">伤害</span></div>
<div style="left:549px;top:48px;width:40px;height:30px;background:#0078d7;border-right:1px solid #a3b5cc;border-bottom:1px solid #a3b5cc"></div>
<div class="t c" style="left:547px;top:54px;width:41px;color:#fff">6</div>
<div style="left:549px;top:78px;width:40px;height:30px;background:#d8e4f1;border-right:1px solid #9ab4d2;border-bottom:1px solid #9ab4d2"></div>
<div class="t c" style="left:547px;top:84px;width:41px;color:#000">3</div>
<div style="left:549px;top:108px;width:40px;height:30px;background:#fff;border-right:1px solid #9ab4d2;border-bottom:1px solid #9ab4d2"></div>
<div class="t c" style="left:547px;top:114px;width:41px;color:#000">9</div>
<div style="left:549px;top:138px;width:40px;height:30px;background:#d8e4f1;border-right:1px solid #9ab4d2;border-bottom:1px solid #9ab4d2"></div>
<div class="t c" style="left:547px;top:144px;width:41px;color:#000">16</div>
<div style="left:549px;top:168px;width:40px;height:30px;background:#fff;border-right:1px solid #9ab4d2;border-bottom:1px solid #9ab4d2"></div>
<div class="t c" style="left:547px;top:174px;width:41px;color:#000">12</div>
<div style="left:589px;top:0px;width:40px;height:48px;background:#fff;border-right:1px solid #e0e0e0;border-bottom:1px solid #a0a0a0"></div>
<div class="t c" style="left:587px;top:7px;width:42px;"><span class="z">最大</span></div>
<div class="t c" style="left:587px;top:24px;width:42px;"><span class="z">伤害</span></div>
<div style="left:589px;top:48px;width:40px;height:30px;background:#0078d7;border-right:1px solid #a3b5cc;border-bottom:1px solid #a3b5cc"></div>
<div class="t c" style="left:587px;top:54px;width:41px;color:#fff">11</div>
<div style="left:589px;top:78px;width:40px;height:30px;background:#d8e4f1;border-right:1px solid #9ab4d2;border-bottom:1px solid #9ab4d2"></div>
<div class="t c" style="left:587px;top:84px;width:41px;color:#000">7</div>
<div style="left:589px;top:108px;width:40px;height:30px;background:#fff;border-right:1px solid #9ab4d2;border-bottom:1px solid #9ab4d2"></div>
<div class="t c" style="left:587px;top:114px;width:41px;color:#000">15</div>
<div style="left:589px;top:138px;width:40px;height:30px;background:#d8e4f1;border-right:1px solid #9ab4d2;border-bottom:1px solid #9ab4d2"></div>
<div class="t c" style="left:587px;top:144px;width:41px;color:#000">26</div>
<div style="left:589px;top:168px;width:40px;height:30px;background:#fff;border-right:1px solid #9ab4d2;border-bottom:1px solid #9ab4d2"></div>
<div class="t c" style="left:587px;top:174px;width:41px;color:#000">18</div>
<div style="left:629px;top:0px;width:40px;height:48px;background:#fff;border-right:1px solid #e0e0e0;border-bottom:1px solid #a0a0a0"></div>
<div class="t c" style="left:627px;top:15px;width:42px;"><span class="z">攻速</span></div>
<div style="left:629px;top:48px;width:40px;height:30px;background:#0078d7;border-right:1px solid #a3b5cc;border-bottom:1px solid #a3b5cc"></div>
<div class="t c" style="left:627px;top:54px;width:41px;color:#fff">50</div>
<div style="left:629px;top:78px;width:40px;height:30px;background:#d8e4f1;border-right:1px solid #9ab4d2;border-bottom:1px solid #9ab4d2"></div>
<div class="t c" style="left:627px;top:84px;width:41px;color:#000">20</div>
<div style="left:629px;top:108px;width:40px;height:30px;background:#fff;border-right:1px solid #9ab4d2;border-bottom:1px solid #9ab4d2"></div>
<div class="t c" style="left:627px;top:114px;width:41px;color:#000">40</div>
<div style="left:629px;top:138px;width:40px;height:30px;background:#d8e4f1;border-right:1px solid #9ab4d2;border-bottom:1px solid #9ab4d2"></div>
<div class="t c" style="left:627px;top:144px;width:41px;color:#000">35</div>
<div style="left:629px;top:168px;width:40px;height:30px;background:#fff;border-right:1px solid #9ab4d2;border-bottom:1px solid #9ab4d2"></div>
<div class="t c" style="left:627px;top:174px;width:41px;color:#000">30</div>
<div style="left:669px;top:0px;width:40px;height:48px;background:#fff;border-right:1px solid #e0e0e0;border-bottom:1px solid #a0a0a0"></div>
<div class="t c" style="left:667px;top:15px;width:42px;"><span class="z">耐久</span></div>
<div style="left:669px;top:48px;width:40px;height:30px;background:#0078d7;border-right:1px solid #a3b5cc;border-bottom:1px solid #a3b5cc"></div>
<div class="t c" style="left:667px;top:54px;width:41px;color:#fff">20</div>
<div style="left:669px;top:78px;width:40px;height:30px;background:#d8e4f1;border-right:1px solid #9ab4d2;border-bottom:1px solid #9ab4d2"></div>
<div class="t c" style="left:667px;top:84px;width:41px;color:#000">22</div>
<div style="left:669px;top:108px;width:40px;height:30px;background:#fff;border-right:1px solid #9ab4d2;border-bottom:1px solid #9ab4d2"></div>
<div class="t c" style="left:667px;top:114px;width:41px;color:#000">23</div>
<div style="left:669px;top:138px;width:40px;height:30px;background:#d8e4f1;border-right:1px solid #9ab4d2;border-bottom:1px solid #9ab4d2"></div>
<div class="t c" style="left:667px;top:144px;width:41px;color:#000">27</div>
<div style="left:669px;top:168px;width:40px;height:30px;background:#fff;border-right:1px solid #9ab4d2;border-bottom:1px solid #9ab4d2"></div>
<div class="t c" style="left:667px;top:174px;width:41px;color:#000">24</div>
<div style="left:709px;top:0px;width:40px;height:48px;background:#fff;border-right:1px solid #e0e0e0;border-bottom:1px solid #a0a0a0"></div>
<div class="t c" style="left:707px;top:7px;width:42px;"><span class="z">魔法</span></div>
<div class="t c" style="left:707px;top:24px;width:42px;"><span class="z">耐久</span></div>
<div style="left:709px;top:48px;width:40px;height:30px;background:#0078d7;border-right:1px solid #a3b5cc;border-bottom:1px solid #a3b5cc"></div>
<div class="t c" style="left:707px;top:54px;width:41px;color:#fff">0</div>
<div style="left:709px;top:78px;width:40px;height:30px;background:#d8e4f1;border-right:1px solid #9ab4d2;border-bottom:1px solid #9ab4d2"></div>
<div class="t c" style="left:707px;top:84px;width:41px;color:#000">0</div>
<div style="left:709px;top:108px;width:40px;height:30px;background:#fff;border-right:1px solid #9ab4d2;border-bottom:1px solid #9ab4d2"></div>
<div class="t c" style="left:707px;top:114px;width:41px;color:#000">0</div>
<div style="left:709px;top:138px;width:40px;height:30px;background:#d8e4f1;border-right:1px solid #9ab4d2;border-bottom:1px solid #9ab4d2"></div>
<div class="t c" style="left:707px;top:144px;width:41px;color:#000">0</div>
<div style="left:709px;top:168px;width:40px;height:30px;background:#fff;border-right:1px solid #9ab4d2;border-bottom:1px solid #9ab4d2"></div>
<div class="t c" style="left:707px;top:174px;width:41px;color:#000">0</div>
<div style="left:749px;top:0px;width:40px;height:48px;background:#fff;border-right:1px solid #e0e0e0;border-bottom:1px solid #a0a0a0"></div>
<div class="t c" style="left:747px;top:3px;width:42px;"><span class="z">魔法</span></div>
<div class="t c" style="left:747px;top:20px;width:42px;"><span class="z">攻击</span></div>
<div class="t c" style="left:747px;top:37px;width:42px;"><span class="z">率</span></div>
<div style="left:749px;top:48px;width:40px;height:30px;background:#0078d7;border-right:1px solid #a3b5cc;border-bottom:1px solid #a3b5cc"></div>
<div class="t c" style="left:747px;top:54px;width:41px;color:#fff">0</div>
<div style="left:749px;top:78px;width:40px;height:30px;background:#d8e4f1;border-right:1px solid #9ab4d2;border-bottom:1px solid #9ab4d2"></div>
<div class="t c" style="left:747px;top:84px;width:41px;color:#000">0</div>
<div style="left:749px;top:108px;width:40px;height:30px;background:#fff;border-right:1px solid #9ab4d2;border-bottom:1px solid #9ab4d2"></div>
<div class="t c" style="left:747px;top:114px;width:41px;color:#000">0</div>
<div style="left:749px;top:138px;width:40px;height:30px;background:#d8e4f1;border-right:1px solid #9ab4d2;border-bottom:1px solid #9ab4d2"></div>
<div class="t c" style="left:747px;top:144px;width:41px;color:#000">0</div>
<div style="left:749px;top:168px;width:40px;height:30px;background:#fff;border-right:1px solid #9ab4d2;border-bottom:1px solid #9ab4d2"></div>
<div class="t c" style="left:747px;top:174px;width:41px;color:#000">0</div>
<div style="left:789px;top:0px;width:40px;height:48px;background:#fff;border-right:1px solid #e0e0e0;border-bottom:1px solid #a0a0a0"></div>
<div class="t c" style="left:787px;top:7px;width:42px;"><span class="z">等级</span></div>
<div class="t c" style="left:787px;top:24px;width:42px;"><span class="z">要求</span></div>
<div style="left:789px;top:48px;width:40px;height:30px;background:#0078d7;border-right:1px solid #a3b5cc;border-bottom:1px solid #a3b5cc"></div>
<div class="t c" style="left:787px;top:54px;width:41px;color:#fff">0</div>
<div style="left:789px;top:78px;width:40px;height:30px;background:#d8e4f1;border-right:1px solid #9ab4d2;border-bottom:1px solid #9ab4d2"></div>
<div class="t c" style="left:787px;top:84px;width:41px;color:#000">0</div>
<div style="left:789px;top:108px;width:40px;height:30px;background:#fff;border-right:1px solid #9ab4d2;border-bottom:1px solid #9ab4d2"></div>
<div class="t c" style="left:787px;top:114px;width:41px;color:#000">0</div>
<div style="left:789px;top:138px;width:40px;height:30px;background:#d8e4f1;border-right:1px solid #9ab4d2;border-bottom:1px solid #9ab4d2"></div>
<div class="t c" style="left:787px;top:144px;width:41px;color:#000">0</div>
<div style="left:789px;top:168px;width:40px;height:30px;background:#fff;border-right:1px solid #9ab4d2;border-bottom:1px solid #9ab4d2"></div>
<div class="t c" style="left:787px;top:174px;width:41px;color:#000">0</div>
<div style="left:829px;top:0px;width:40px;height:48px;background:#fff;border-right:1px solid #e0e0e0;border-bottom:1px solid #a0a0a0"></div>
<div class="t c" style="left:827px;top:7px;width:42px;"><span class="z">力量</span></div>
<div class="t c" style="left:827px;top:24px;width:42px;"><span class="z">要求</span></div>
<div style="left:829px;top:48px;width:40px;height:30px;background:#0078d7;border-right:1px solid #a3b5cc;border-bottom:1px solid #a3b5cc"></div>
<div class="t c" style="left:827px;top:54px;width:41px;color:#fff">40</div>
<div style="left:829px;top:78px;width:40px;height:30px;background:#d8e4f1;border-right:1px solid #9ab4d2;border-bottom:1px solid #9ab4d2"></div>
<div class="t c" style="left:827px;top:84px;width:41px;color:#000">60</div>
<div style="left:829px;top:108px;width:40px;height:30px;background:#fff;border-right:1px solid #9ab4d2;border-bottom:1px solid #9ab4d2"></div>
<div class="t c" style="left:827px;top:114px;width:41px;color:#000">50</div>
<div style="left:829px;top:138px;width:40px;height:30px;background:#d8e4f1;border-right:1px solid #9ab4d2;border-bottom:1px solid #9ab4d2"></div>
<div class="t c" style="left:827px;top:144px;width:41px;color:#000">80</div>
<div style="left:829px;top:168px;width:40px;height:30px;background:#fff;border-right:1px solid #9ab4d2;border-bottom:1px solid #9ab4d2"></div>
<div class="t c" style="left:827px;top:174px;width:41px;color:#000">60</div>
<div style="left:869px;top:0px;width:40px;height:48px;background:#fff;border-right:1px solid #e0e0e0;border-bottom:1px solid #a0a0a0"></div>
<div class="t c" style="left:867px;top:7px;width:42px;"><span class="z">敏捷</span></div>
<div class="t c" style="left:867px;top:24px;width:42px;"><span class="z">要求</span></div>
<div style="left:869px;top:48px;width:40px;height:30px;background:#0078d7;border-right:1px solid #a3b5cc;border-bottom:1px solid #a3b5cc"></div>
<div class="t c" style="left:867px;top:54px;width:41px;color:#fff">40</div>
<div style="left:869px;top:78px;width:40px;height:30px;background:#d8e4f1;border-right:1px solid #9ab4d2;border-bottom:1px solid #9ab4d2"></div>
<div class="t c" style="left:867px;top:84px;width:41px;color:#000">0</div>
<div style="left:869px;top:108px;width:40px;height:30px;background:#fff;border-right:1px solid #9ab4d2;border-bottom:1px solid #9ab4d2"></div>
<div class="t c" style="left:867px;top:114px;width:41px;color:#000">40</div>
<div style="left:869px;top:138px;width:40px;height:30px;background:#d8e4f1;border-right:1px solid #9ab4d2;border-bottom:1px solid #9ab4d2"></div>
<div class="t c" style="left:867px;top:144px;width:41px;color:#000">40</div>
<div style="left:869px;top:168px;width:40px;height:30px;background:#fff;border-right:1px solid #9ab4d2;border-bottom:1px solid #9ab4d2"></div>
<div class="t c" style="left:867px;top:174px;width:41px;color:#000">40</div>
<div style="left:909px;top:0px;width:40px;height:48px;background:#fff;border-right:1px solid #e0e0e0;border-bottom:1px solid #a0a0a0"></div>
<div class="t c" style="left:907px;top:7px;width:42px;"><span class="z">智力</span></div>
<div class="t c" style="left:907px;top:24px;width:42px;"><span class="z">要求</span></div>
<div style="left:909px;top:48px;width:40px;height:30px;background:#0078d7;border-right:1px solid #a3b5cc;border-bottom:1px solid #a3b5cc"></div>
<div class="t c" style="left:907px;top:54px;width:41px;color:#fff">0</div>
<div style="left:909px;top:78px;width:40px;height:30px;background:#d8e4f1;border-right:1px solid #9ab4d2;border-bottom:1px solid #9ab4d2"></div>
<div class="t c" style="left:907px;top:84px;width:41px;color:#000">0</div>
<div style="left:909px;top:108px;width:40px;height:30px;background:#fff;border-right:1px solid #9ab4d2;border-bottom:1px solid #9ab4d2"></div>
<div class="t c" style="left:907px;top:114px;width:41px;color:#000">0</div>
<div style="left:909px;top:138px;width:40px;height:30px;background:#d8e4f1;border-right:1px solid #9ab4d2;border-bottom:1px solid #9ab4d2"></div>
<div class="t c" style="left:907px;top:144px;width:41px;color:#000">0</div>
<div style="left:909px;top:168px;width:40px;height:30px;background:#fff;border-right:1px solid #9ab4d2;border-bottom:1px solid #9ab4d2"></div>
<div class="t c" style="left:907px;top:174px;width:41px;color:#000">0</div>
<div style="left:949px;top:0px;width:40px;height:48px;background:#fff;border-right:1px solid #e0e0e0;border-bottom:1px solid #a0a0a0"></div>
<div class="t c" style="left:947px;top:7px;width:42px;"><span class="z">体力</span></div>
<div class="t c" style="left:947px;top:24px;width:42px;"><span class="z">要求</span></div>
<div style="left:949px;top:48px;width:40px;height:30px;background:#0078d7;border-right:1px solid #a3b5cc;border-bottom:1px solid #a3b5cc"></div>
<div class="t c" style="left:947px;top:54px;width:41px;color:#fff">0</div>
<div style="left:949px;top:78px;width:40px;height:30px;background:#d8e4f1;border-right:1px solid #9ab4d2;border-bottom:1px solid #9ab4d2"></div>
<div class="t c" style="left:947px;top:84px;width:41px;color:#000">0</div>
<div style="left:949px;top:108px;width:40px;height:30px;background:#fff;border-right:1px solid #9ab4d2;border-bottom:1px solid #9ab4d2"></div>
<div class="t c" style="left:947px;top:114px;width:41px;color:#000">0</div>
<div style="left:949px;top:138px;width:40px;height:30px;background:#d8e4f1;border-right:1px solid #9ab4d2;border-bottom:1px solid #9ab4d2"></div>
<div class="t c" style="left:947px;top:144px;width:41px;color:#000">0</div>
<div style="left:949px;top:168px;width:40px;height:30px;background:#fff;border-right:1px solid #9ab4d2;border-bottom:1px solid #9ab4d2"></div>
<div class="t c" style="left:947px;top:174px;width:41px;color:#000">0</div>
<div style="left:989px;top:0px;width:40px;height:48px;background:#fff;border-right:1px solid #e0e0e0;border-bottom:1px solid #a0a0a0"></div>
<div class="t c" style="left:987px;top:7px;width:42px;"><span class="z">统率</span></div>
<div class="t c" style="left:987px;top:24px;width:42px;"><span class="z">要求</span></div>
<div style="left:989px;top:48px;width:40px;height:30px;background:#0078d7;border-right:1px solid #a3b5cc;border-bottom:1px solid #a3b5cc"></div>
<div class="t c" style="left:987px;top:54px;width:41px;color:#fff">0</div>
<div style="left:989px;top:78px;width:40px;height:30px;background:#d8e4f1;border-right:1px solid #9ab4d2;border-bottom:1px solid #9ab4d2"></div>
<div class="t c" style="left:987px;top:84px;width:41px;color:#000">0</div>
<div style="left:989px;top:108px;width:40px;height:30px;background:#fff;border-right:1px solid #9ab4d2;border-bottom:1px solid #9ab4d2"></div>
<div class="t c" style="left:987px;top:114px;width:41px;color:#000">0</div>
<div style="left:989px;top:138px;width:40px;height:30px;background:#d8e4f1;border-right:1px solid #9ab4d2;border-bottom:1px solid #9ab4d2"></div>
<div class="t c" style="left:987px;top:144px;width:41px;color:#000">0</div>
<div style="left:989px;top:168px;width:40px;height:30px;background:#fff;border-right:1px solid #9ab4d2;border-bottom:1px solid #9ab4d2"></div>
<div class="t c" style="left:987px;top:174px;width:41px;color:#000">0</div>
<div style="left:1029px;top:0px;width:40px;height:48px;background:#fff;border-right:1px solid #e0e0e0;border-bottom:1px solid #a0a0a0"></div>
<div class="t c" style="left:1027px;top:7px;width:42px;"><span class="z">魔法</span></div>
<div class="t c" style="left:1027px;top:24px;width:42px;"><span class="z">师</span></div>
<div style="left:1029px;top:48px;width:40px;height:30px;background:#0078d7;border-right:1px solid #a3b5cc;border-bottom:1px solid #a3b5cc"></div>
<div class="t c" style="left:1027px;top:54px;width:41px;color:#fff">1</div>
<div style="left:1029px;top:78px;width:40px;height:30px;background:#d8e4f1;border-right:1px solid #9ab4d2;border-bottom:1px solid #9ab4d2"></div>
<div class="t c" style="left:1027px;top:84px;width:41px;color:#000">1</div>
<div style="left:1029px;top:108px;width:40px;height:30px;background:#fff;border-right:1px solid #9ab4d2;border-bottom:1px solid #9ab4d2"></div>
<div class="t c" style="left:1027px;top:114px;width:41px;color:#000">0</div>
<div style="left:1029px;top:138px;width:40px;height:30px;background:#d8e4f1;border-right:1px solid #9ab4d2;border-bottom:1px solid #9ab4d2"></div>
<div class="t c" style="left:1027px;top:144px;width:41px;color:#000">0</div>
<div style="left:1029px;top:168px;width:40px;height:30px;background:#fff;border-right:1px solid #9ab4d2;border-bottom:1px solid #9ab4d2"></div>
<div class="t c" style="left:1027px;top:174px;width:41px;color:#000">0</div>
<div style="left:1069px;top:0px;width:40px;height:48px;background:#fff;border-right:1px solid #e0e0e0;border-bottom:1px solid #a0a0a0"></div>
<div class="t c" style="left:1067px;top:15px;width:42px;"><span class="z">剑士</span></div>
<div style="left:1069px;top:48px;width:40px;height:30px;background:#0078d7;border-right:1px solid #a3b5cc;border-bottom:1px solid #a3b5cc"></div>
<div class="t c" style="left:1067px;top:54px;width:41px;color:#fff">1</div>
<div style="left:1069px;top:78px;width:40px;height:30px;background:#d8e4f1;border-right:1px solid #9ab4d2;border-bottom:1px solid #9ab4d2"></div>
<div class="t c" style="left:1067px;top:84px;width:41px;color:#000">1</div>
<div style="left:1069px;top:108px;width:40px;height:30px;background:#fff;border-right:1px solid #9ab4d2;border-bottom:1px solid #9ab4d2"></div>
<div class="t c" style="left:1067px;top:114px;width:41px;color:#000">1</div>
<div style="left:1069px;top:138px;width:40px;height:30px;background:#d8e4f1;border-right:1px solid #9ab4d2;border-bottom:1px solid #9ab4d2"></div>
<div class="t c" style="left:1067px;top:144px;width:41px;color:#000">1</div>
<div style="left:1069px;top:168px;width:40px;height:30px;background:#fff;border-right:1px solid #9ab4d2;border-bottom:1px solid #9ab4d2"></div>
<div class="t c" style="left:1067px;top:174px;width:41px;color:#000">1</div>
<div style="left:1109px;top:0px;width:40px;height:48px;background:#fff;border-right:1px solid #e0e0e0;border-bottom:1px solid #a0a0a0"></div>
<div class="t c" style="left:1107px;top:7px;width:42px;"><span class="z">弓箭</span></div>
<div class="t c" style="left:1107px;top:24px;width:42px;"><span class="z">手</span></div>
<div style="left:1109px;top:48px;width:40px;height:30px;background:#0078d7;border-right:1px solid #a3b5cc;border-bottom:1px solid #a3b5cc"></div>
<div class="t c" style="left:1107px;top:54px;width:41px;color:#fff">1</div>
<div style="left:1109px;top:78px;width:40px;height:30px;background:#d8e4f1;border-right:1px solid #9ab4d2;border-bottom:1px solid #9ab4d2"></div>
<div class="t c" style="left:1107px;top:84px;width:41px;color:#000">1</div>
<div style="left:1109px;top:108px;width:40px;height:30px;background:#fff;border-right:1px solid #9ab4d2;border-bottom:1px solid #9ab4d2"></div>
<div class="t c" style="left:1107px;top:114px;width:41px;color:#000">1</div>
<div style="left:1109px;top:138px;width:40px;height:30px;background:#d8e4f1;border-right:1px solid #9ab4d2;border-bottom:1px solid #9ab4d2"></div>
<div class="t c" style="left:1107px;top:144px;width:41px;color:#000">0</div>
<div style="left:1109px;top:168px;width:40px;height:30px;background:#fff;border-right:1px solid #9ab4d2;border-bottom:1px solid #9ab4d2"></div>
<div class="t c" style="left:1107px;top:174px;width:41px;color:#000">0</div>
<div style="left:1149px;top:0px;width:40px;height:48px;background:#fff;border-right:1px solid #e0e0e0;border-bottom:1px solid #a0a0a0"></div>
<div class="t c" style="left:1147px;top:7px;width:42px;"><span class="z">魔剑</span></div>
<div class="t c" style="left:1147px;top:24px;width:42px;"><span class="z">士</span></div>
<div style="left:1149px;top:48px;width:40px;height:30px;background:#0078d7;border-right:1px solid #a3b5cc;border-bottom:1px solid #a3b5cc"></div>
<div class="t c" style="left:1147px;top:54px;width:41px;color:#fff">1</div>
<div style="left:1149px;top:78px;width:40px;height:30px;background:#d8e4f1;border-right:1px solid #9ab4d2;border-bottom:1px solid #9ab4d2"></div>
<div class="t c" style="left:1147px;top:84px;width:41px;color:#000">1</div>
<div style="left:1149px;top:108px;width:40px;height:30px;background:#fff;border-right:1px solid #9ab4d2;border-bottom:1px solid #9ab4d2"></div>
<div class="t c" style="left:1147px;top:114px;width:41px;color:#000">1</div>
<div style="left:1149px;top:138px;width:40px;height:30px;background:#d8e4f1;border-right:1px solid #9ab4d2;border-bottom:1px solid #9ab4d2"></div>
<div class="t c" style="left:1147px;top:144px;width:41px;color:#000">1</div>
<div style="left:1149px;top:168px;width:40px;height:30px;background:#fff;border-right:1px solid #9ab4d2;border-bottom:1px solid #9ab4d2"></div>
<div class="t c" style="left:1147px;top:174px;width:41px;color:#000">1</div>
<div style="left:1189px;top:0px;width:40px;height:48px;background:#fff;border-right:1px solid #e0e0e0;border-bottom:1px solid #a0a0a0"></div>
<div class="t c" style="left:1187px;top:7px;width:42px;"><span class="z">圣导</span></div>
<div class="t c" style="left:1187px;top:24px;width:42px;"><span class="z">师</span></div>
<div style="left:1189px;top:48px;width:40px;height:30px;background:#0078d7;border-right:1px solid #a3b5cc;border-bottom:1px solid #a3b5cc"></div>
<div class="t c" style="left:1187px;top:54px;width:41px;color:#fff">1</div>
<div style="left:1189px;top:78px;width:40px;height:30px;background:#d8e4f1;border-right:1px solid #9ab4d2;border-bottom:1px solid #9ab4d2"></div>
<div class="t c" style="left:1187px;top:84px;width:41px;color:#000">1</div>
<div style="left:1189px;top:108px;width:40px;height:30px;background:#fff;border-right:1px solid #9ab4d2;border-bottom:1px solid #9ab4d2"></div>
<div class="t c" style="left:1187px;top:114px;width:41px;color:#000">1</div>
<div style="left:1189px;top:138px;width:40px;height:30px;background:#d8e4f1;border-right:1px solid #9ab4d2;border-bottom:1px solid #9ab4d2"></div>
<div class="t c" style="left:1187px;top:144px;width:41px;color:#000">1</div>
<div style="left:1189px;top:168px;width:40px;height:30px;background:#fff;border-right:1px solid #9ab4d2;border-bottom:1px solid #9ab4d2"></div>
<div class="t c" style="left:1187px;top:174px;width:41px;color:#000">1</div>
<div style="left:1229px;top:0px;width:40px;height:48px;background:#fff;border-right:1px solid #e0e0e0;border-bottom:1px solid #a0a0a0"></div>
<div class="t c" style="left:1227px;top:7px;width:42px;"><span class="z">召唤</span></div>
<div class="t c" style="left:1227px;top:24px;width:42px;"><span class="z">师</span></div>
<div style="left:1229px;top:48px;width:40px;height:30px;background:#0078d7;border-right:1px solid #a3b5cc;border-bottom:1px solid #a3b5cc"></div>
<div style="left:1229px;top:78px;width:40px;height:30px;background:#d8e4f1;border-right:1px solid #9ab4d2;border-bottom:1px solid #9ab4d2"></div>
<div style="left:1229px;top:108px;width:40px;height:30px;background:#fff;border-right:1px solid #9ab4d2;border-bottom:1px solid #9ab4d2"></div>
<div style="left:1229px;top:138px;width:40px;height:30px;background:#d8e4f1;border-right:1px solid #9ab4d2;border-bottom:1px solid #9ab4d2"></div>
<div style="left:1229px;top:168px;width:40px;height:30px;background:#fff;border-right:1px solid #9ab4d2;border-bottom:1px solid #9ab4d2"></div>
</div>
<div style="left:1258px;top:522px;width:15px;height:199px;background:#f0f0f0"></div>
<div style="left:1258px;top:539px;width:15px;height:17px;background:#cdcdcd"></div>
<svg style="left:0;top:0;overflow:visible" width="1" height="1"><path d="M1262.5 533.2 L1265.5 528.8 L1268.5 533.2" stroke="#606060" stroke-width="2" fill="none"/></svg>
<div style="left:-90px;top:80px;white-space:nowrap;font-family:'Liberation Sans',sans-serif;font-weight:bold;font-size:34px;line-height:34px;letter-spacing:0.2px;color:rgba(140,146,156,0.19);pointer-events:none">www.aae.ink</div><div style="left:312px;top:80px;white-space:nowrap;font-family:'Liberation Sans',sans-serif;font-weight:bold;font-size:34px;line-height:34px;letter-spacing:0.2px;color:rgba(140,146,156,0.19);pointer-events:none">www.aae.ink</div><div style="left:714px;top:80px;white-space:nowrap;font-family:'Liberation Sans',sans-serif;font-weight:bold;font-size:34px;line-height:34px;letter-spacing:0.2px;color:rgba(140,146,156,0.19);pointer-events:none">www.aae.ink</div><div style="left:1120px;top:80px;white-space:nowrap;font-family:'Liberation Sans',sans-serif;font-weight:bold;font-size:34px;line-height:34px;letter-spacing:0.2px;color:rgba(140,146,156,0.19);pointer-events:none">www.aae.ink</div><div style="left:112px;top:303px;white-space:nowrap;font-family:'Liberation Sans',sans-serif;font-weight:bold;font-size:34px;line-height:34px;letter-spacing:0.2px;color:rgba(140,146,156,0.19);pointer-events:none">www.aae.ink</div><div style="left:514px;top:303px;white-space:nowrap;font-family:'Liberation Sans',sans-serif;font-weight:bold;font-size:34px;line-height:34px;letter-spacing:0.2px;color:rgba(140,146,156,0.19);pointer-events:none">www.aae.ink</div><div style="left:918px;top:303px;white-space:nowrap;font-family:'Liberation Sans',sans-serif;font-weight:bold;font-size:34px;line-height:34px;letter-spacing:0.2px;color:rgba(140,146,156,0.19);pointer-events:none">www.aae.ink</div><div style="left:-90px;top:530px;white-space:nowrap;font-family:'Liberation Sans',sans-serif;font-weight:bold;font-size:34px;line-height:34px;letter-spacing:0.2px;color:rgba(140,146,156,0.19);pointer-events:none">www.aae.ink</div><div style="left:311px;top:530px;white-space:nowrap;font-family:'Liberation Sans',sans-serif;font-weight:bold;font-size:34px;line-height:34px;letter-spacing:0.2px;color:rgba(140,146,156,0.19);pointer-events:none">www.aae.ink</div><div style="left:713px;top:530px;white-space:nowrap;font-family:'Liberation Sans',sans-serif;font-weight:bold;font-size:34px;line-height:34px;letter-spacing:0.2px;color:rgba(140,146,156,0.19);pointer-events:none">www.aae.ink</div><div style="left:1118px;top:530px;white-space:nowrap;font-family:'Liberation Sans',sans-serif;font-weight:bold;font-size:34px;line-height:34px;letter-spacing:0.2px;color:rgba(140,146,156,0.19);pointer-events:none">www.aae.ink</div>
</body></html>
